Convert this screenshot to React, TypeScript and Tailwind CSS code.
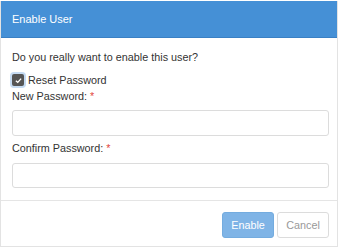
export default function App() {
  return (
    <div
      className="w-[338px] h-[248px] bg-white pt-px overflow-hidden text-[10.8px] text-[#333]"
      style={{ fontFamily: '"Liberation Sans", Arial, sans-serif' }}
    >
      <div className="h-[246px] border-r border-b border-l border-[#e3e3e3] flex flex-col">
        <div className="h-[37px] bg-[#4590d6] border-b border-[#3a80c4] flex items-center px-[11px] text-white text-[11px]">
          Enable User
        </div>

        <div className="pl-[11px] pr-2 pt-[11px] pb-3 border-b border-[#e5e5e5]">
          <p className="leading-4">Do you really want to enable this user?</p>

          <label className="mt-2 h-[14px] flex items-center gap-[3px]">
            <span className="w-3 h-3 rounded-[2px] bg-[#555] ring-2 ring-[#c5dbf3] flex items-center justify-center">
              <svg viewBox="0 0 12 12" className="w-[9px] h-[9px]">
                <path d="M2.5 6.2 L5 8.5 L9.5 3.5" fill="none" stroke="#fff" strokeWidth="1.8" />
              </svg>
            </span>
            <span className="ml-[1px]">Reset Password</span>
          </label>

          <div className="mt-[1px] leading-4">
            New Password: <span className="text-[#e2453c]">*</span>
          </div>
          <input
            type="password"
            className="mt-[6px] block w-full h-[26px] border border-[#dcdcdc] rounded-[3px] outline-none"
          />

          <div className="mt-1 leading-4">
            Confirm Password: <span className="text-[#e2453c]">*</span>
          </div>
          <input
            type="password"
            className="mt-[7px] block w-full h-[25px] border border-[#dcdcdc] rounded-[3px] outline-none"
          />
        </div>

        <div className="flex justify-end gap-[3px] pt-[11px] pr-2">
          <button className="w-[52px] h-[26px] rounded-[3px] bg-[#7fb4e6] border border-[#74acdf] text-white">
            Enable
          </button>
          <button className="w-[52px] h-[26px] rounded-[3px] bg-white border border-[#dcdcdc] text-[#999]">
            Cancel
          </button>
        </div>
      </div>
    </div>
  );
}
